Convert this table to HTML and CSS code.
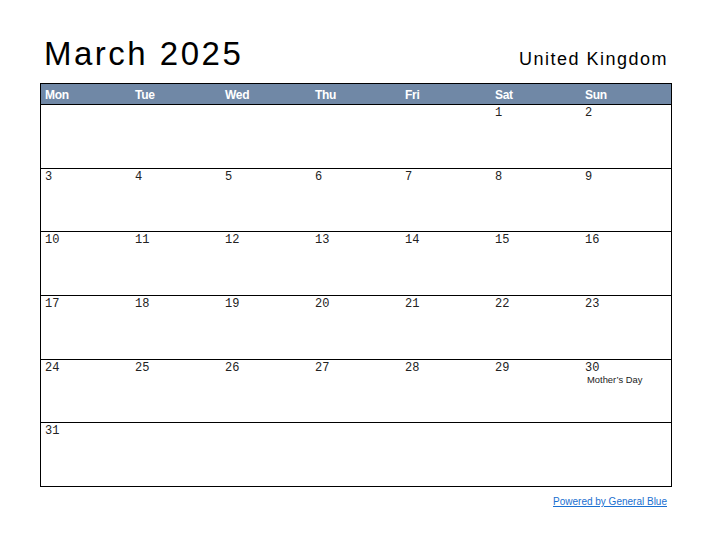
FILE: index.html
```html
<!DOCTYPE html>
<html>
<head>
<meta charset="utf-8">
<link rel="stylesheet" href="styles.css">
</head>
<body>
<div class="page">
  <div class="top">
    <h1 class="title">March 2025</h1>
    <div class="country">United Kingdom</div>
  </div>
  <div class="cal">
    <div class="head">
      <div>Mon</div><div>Tue</div><div>Wed</div><div>Thu</div><div>Fri</div><div>Sat</div><div>Sun</div>
    </div>
    <div class="weeks">
      <div class="week">
        <div class="day"></div><div class="day"></div><div class="day"></div><div class="day"></div><div class="day"></div><div class="day"><span class="num">1</span></div><div class="day"><span class="num">2</span></div>
      </div>
      <div class="week">
        <div class="day"><span class="num">3</span></div><div class="day"><span class="num">4</span></div><div class="day"><span class="num">5</span></div><div class="day"><span class="num">6</span></div><div class="day"><span class="num">7</span></div><div class="day"><span class="num">8</span></div><div class="day"><span class="num">9</span></div>
      </div>
      <div class="week">
        <div class="day"><span class="num">10</span></div><div class="day"><span class="num">11</span></div><div class="day"><span class="num">12</span></div><div class="day"><span class="num">13</span></div><div class="day"><span class="num">14</span></div><div class="day"><span class="num">15</span></div><div class="day"><span class="num">16</span></div>
      </div>
      <div class="week">
        <div class="day"><span class="num">17</span></div><div class="day"><span class="num">18</span></div><div class="day"><span class="num">19</span></div><div class="day"><span class="num">20</span></div><div class="day"><span class="num">21</span></div><div class="day"><span class="num">22</span></div><div class="day"><span class="num">23</span></div>
      </div>
      <div class="week">
        <div class="day"><span class="num">24</span></div><div class="day"><span class="num">25</span></div><div class="day"><span class="num">26</span></div><div class="day"><span class="num">27</span></div><div class="day"><span class="num">28</span></div><div class="day"><span class="num">29</span></div><div class="day"><span class="num">30</span><span class="event">Mother’s Day</span></div>
      </div>
      <div class="week">
        <div class="day"><span class="num">31</span></div><div class="day"></div><div class="day"></div><div class="day"></div><div class="day"></div><div class="day"></div><div class="day"></div>
      </div>
    </div>
  </div>
  <div class="footer"><a class="credit" href="#">Powered by General Blue</a></div>
</div>
</body>
</html>
```

FILE: styles.css
```css
html, body {
  margin: 0;
  padding: 0;
  background: #ffffff;
}
.page {
  width: 632px;
  padding: 0 0 0 40px;
  font-family: "Liberation Sans", Arial, sans-serif;
  color: #000;
}
.top {
  display: flex;
  justify-content: space-between;
  align-items: flex-end;
  height: 83px;
  box-sizing: border-box;
  padding: 0 5px 14px 5px;
}
.title {
  margin: 0;
  font-weight: normal;
  font-size: 33px;
  line-height: 36px;
  letter-spacing: 2.5px;
  margin-bottom: -3px;
  margin-left: -1px;
}
.country {
  font-size: 18px;
  line-height: 20px;
  letter-spacing: 1.5px;
  margin-right: -1px;
}
.cal {
  border: 1px solid #000;
  box-sizing: border-box;
  width: 632px;
}
.head {
  display: grid;
  grid-template-columns: repeat(7, 1fr);
  background: #7088a6;
  height: 20px;
}
.head div {
  color: #fff;
  font-weight: bold;
  font-size: 12px;
  line-height: 20px;
  padding: 1px 0 0 4px;
  letter-spacing: -0.3px;
}
.weeks {
  display: grid;
  grid-template-rows: repeat(6, 1fr);
  height: 382px;
}
.week {
  display: grid;
  grid-template-columns: repeat(7, 1fr);
  border-top: 1px solid #000;
}
.day {
  display: flex;
  flex-direction: column;
  padding: 2px 0 0 4px;
}
.num {
  font-family: "Liberation Mono", "Courier New", monospace;
  font-size: 12px;
  line-height: 13px;
  color: #222;
}
.event {
  font-size: 9.4px;
  line-height: 12px;
  margin: -1px 0 0 2px;
  color: #222;
}
.footer {
  display: flex;
  justify-content: flex-end;
  padding: 9px 5px 0 0;
}
.credit {
  font-size: 10px;
  color: #1a6fd0;
  text-decoration: underline;
}
```
